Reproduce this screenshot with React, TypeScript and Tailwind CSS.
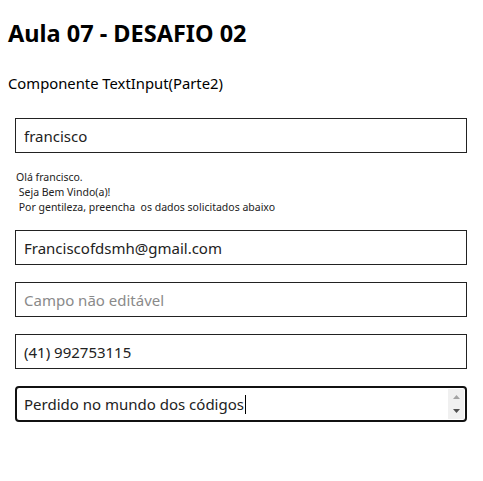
import { useState } from "react";

function Campo({ value, placeholder, readOnly }: { value?: string; placeholder?: string; readOnly?: boolean }) {
    return (
        <input
            type="text"
            defaultValue={value}
            placeholder={placeholder}
            readOnly={readOnly}
            className="block w-[452px] h-[35px] ml-[7px] border border-[#222] bg-white px-2 text-[15px] text-[#222] placeholder:text-[#8a8a8a] outline-none"
        />
    );
}

export default function App() {
    const [nome] = useState("francisco");

    return (
        <div className="p-2 font-['Noto_Sans','Open_Sans',sans-serif] text-black bg-white min-h-screen">
            <h1 className="text-[23.5px] font-bold leading-[28px] mt-[11px]">Aula 07 - DESAFIO 02</h1>
            <p className="text-[14.8px] mt-[26px] leading-[20px]">Componente TextInput(Parte2)</p>

            <div className="mt-[25px]">
                <Campo value={nome} />
                <p className="ml-[8px] mt-[17px] text-[10.5px] leading-[15px] whitespace-pre text-[#222]">
                    {`Olá ${nome}.\n Seja Bem Vindo(a)!\n Por gentileza, preencha  os dados solicitados abaixo`}
                </p>
            </div>

            {/* formulário */}
            <div className="mt-[15px] flex flex-col gap-[17px]">
                <Campo value="Franciscofdsmh@gmail.com" />
                <Campo placeholder="Campo não editável" readOnly />
                <Campo value="(41) 992753115" />
                <div className="relative w-[452px] h-[36px] ml-[7px] border-2 border-[#111] rounded-[4px] bg-white flex items-center">
                    <span className="pl-[7px] text-[15px] text-[#222]">Perdido no mundo dos códigos</span>
                    <span className="w-px h-[19px] bg-black ml-[1px]" />
                    <div className="ml-auto mr-[1px] h-[30px] w-[16px] bg-[#f0f0f0] flex flex-col items-center justify-between py-[6px]">
                        <svg width="7" height="4" viewBox="0 0 7 4"><path d="M0 4 L3.5 0 L7 4 Z" fill="#a3a3a3" /></svg>
                        <svg width="7" height="4" viewBox="0 0 7 4"><path d="M0 0 L3.5 4 L7 0 Z" fill="#505050" /></svg>
                    </div>
                </div>
            </div>
        </div>
    );
}
